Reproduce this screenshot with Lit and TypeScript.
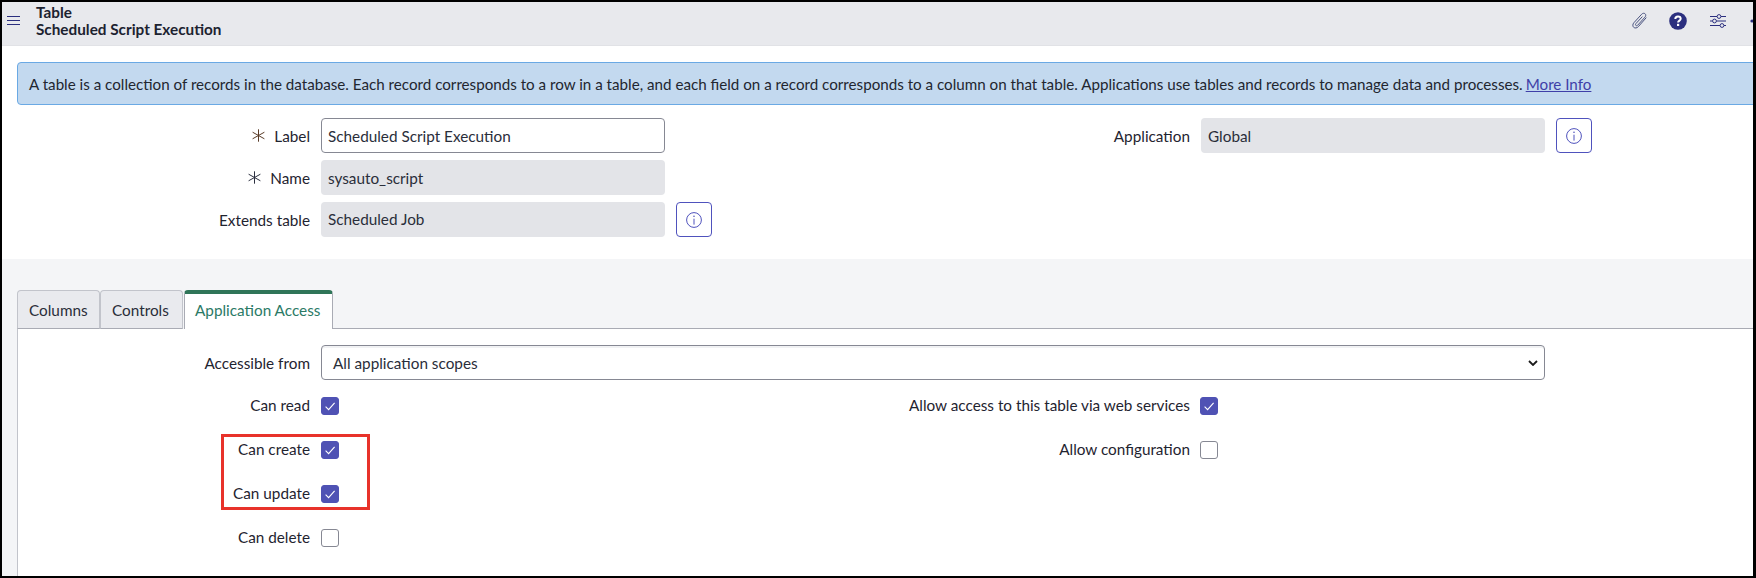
import { LitElement, html, css, svg } from "lit";
import { customElement } from "lit/decorators.js";

const check = svg`<svg class="tick" viewBox="0 0 18 18" width="18" height="18"><path d="M4.6 9.6 7.6 12.6 13.6 5.8" fill="none" stroke="#fff" stroke-width="1.1"/></svg>`;
const info = svg`<svg viewBox="0 0 20 20" width="20" height="20"><circle cx="10" cy="10" r="7.4" fill="none" stroke="#4f52bd" stroke-width="1"/><path d="M10 8.7V14.6" stroke="#4f52bd" stroke-width="1"/><circle cx="10" cy="6.2" r=".8" fill="#4f52bd"/></svg>`;
const starPath = svg`<path d="M6.5 .3V12.7M.6 3.2 12.4 9.8M12.4 3.2 .6 9.8" stroke-width="1" fill="none"/>`;

@customElement("app-root")
export class AppRoot extends LitElement {
  static styles = css`
    :host {
      display: block;
      width: 1756px;
      height: 578px;
      overflow: hidden;
      font-family: Lato, "Liberation Sans", sans-serif;
      font-size: 15.3px;
      color: #1f2430;
    }
    * { box-sizing: border-box; }
    .frame {
      width: 1756px;
      height: 578px;
      border: solid #000;
      border-width: 2px 3px 2px 2px;
      background: #fff;
      position: relative;
      overflow: hidden;
      display: flex;
      flex-direction: column;
    }
    .head {
      height: 44px;
      flex: none;
      background: #e8e9ed;
      border-bottom: 1px solid #e1e2e6;
      display: flex;
      align-items: flex-start;
      padding-left: 5px;
    }
    .burger { width: 13px; height: 9px; margin-top: 14px; margin-right: 16px; display: flex; flex-direction: column; justify-content: space-between; flex: none; }
    .burger i { display: block; height: 1px; background: #2b2f7f; }
    .titles { font-weight: 700; line-height: 17px; color: #1c2230; margin-top: 2px; }
    .titles div { white-space: nowrap; }
    .tools { margin-left: auto; display: flex; align-items: center; margin-right: -14px; margin-top: 10px; height: 18px; }
    .tools svg { display: block; flex: none; }
    .clip { margin-right: 21px; }
    .help, .sliders { margin-right: 22px; }
    .top { padding: 16px 0 0 15px; height: 213px; flex: none; }
    .banner {
      width: 1760px;
      height: 43px;
      background: #c3d9ef;
      border: 1px solid #6aa9e4;
      border-radius: 4px;
      padding-left: 11px;
      display: flex;
      align-items: center;
      white-space: nowrap;
      color: #22262f;
      font-size: 15.18px;
    }
    .banner a { color: #3f3fa8; text-decoration: underline; margin-left: 3px; }
    .form { display: flex; margin-top: 13px; }
    .col { flex: none; display: flex; flex-direction: column; gap: 7px; }
    .col.one { width: 1014px; }
    .col.one .lab { width: 304px; }
    .col.two .lab { width: 170px; }
    .row { display: flex; align-items: center; height: 35px; }
    .lab { padding-right: 11px; display: flex; justify-content: flex-end; align-items: center; white-space: nowrap; flex: none; }
    .star { stroke: #2c3040; margin-right: 9px; }
    .star.req { stroke: #5a3c28; }
    .field {
      width: 344px;
      height: 35px;
      border-radius: 4px;
      background: #e3e4e8;
      padding-left: 7px;
      display: flex;
      align-items: center;
      color: #2a2e3a;
      flex: none;
    }
    .field.edit { background: #fff; border: 1px solid #868893; padding-left: 6px; }
    .field.up { padding-bottom: 2px; }
    .ibtn {
      width: 36px; height: 35px; margin-left: 11px; flex: none;
      border: 1px solid #4f52bd; border-radius: 4px; background: #fff;
      display: flex; align-items: center; justify-content: center;
    }
    .lower { flex: 1; background: #f4f5f7; padding: 31px 0 0 15px; display: flex; flex-direction: column; min-height: 0; }
    .tabs { display: flex; height: 39px; flex: none; }
    .tab {
      height: 39px;
      width: 83px;
      border: 1px solid #c2c4cb;
      border-bottom: 1px solid #a9abb4;
      border-radius: 4px 4px 0 0;
      background: #e9eaee;
      display: flex;
      align-items: center;
      padding: 0 11px;
      color: #2a2e3a;
    }
    .tab.w2 { margin-right: 1px; }
    .tab.on {
      width: 149px;
      padding: 0 10px 3px;
      background: #fff;
      color: #2b7a66;
      border-color: #a9abb4;
      border-top: 4px solid #2f7558;
      border-bottom: none;
    }
    .tabline { flex: 1; border-bottom: 1px solid #a9abb4; }
    .panel {
      flex: 1;
      background: #fff;
      border-left: 1px solid #c2c4cb;
      padding-top: 16px;
      min-height: 0;
    }
    .selrow { display: flex; align-items: center; height: 35px; }
    .selrow .lab { width: 303px; }
    .select {
      width: 1224px; height: 35px;
      border: 1px solid #868893; border-radius: 4px; background: #fff;
      box-shadow: inset 0 2px 0 #f1f2f4;
      display: flex; align-items: center; justify-content: space-between;
      padding: 0 6px 0 11px; color: #2a2e3a; flex: none;
    }
    .checks { display: flex; margin-top: 17px; }
    .ccol { display: flex; flex-direction: column; gap: 26px; flex: none; }
    .ccol.a { width: 879px; }
    .crow { display: flex; align-items: center; height: 18px; }
    .crow .lab { width: 303px; padding-bottom: 3px; }
    .ccol.b .lab { padding-right: 10px; }
    .cb { width: 18px; height: 18px; border-radius: 3px; flex: none; border: 1px solid #868893; background: #fff; }
    .cb.on { background: #4f52b4; border-color: #4f52b4; position: relative; }
    .tick { position: absolute; left: -1px; top: -1px; }
    .mark { position: absolute; left: 219px; top: 432px; width: 149px; height: 76px; border: 3px solid #e8322a; pointer-events: none; }
  `;

  private cb(on: boolean) {
    return html`<span class="cb ${on ? "on" : ""}">${on ? check : ""}</span>`;
  }

  render() {
    return html`<div class="frame">
      <div class="head">
        <div class="burger"><i></i><i></i><i></i></div>
        <div class="titles"><div>Table</div><div>Scheduled Script Execution</div></div>
        <div class="tools">
          <svg class="clip" viewBox="0 0 17 18" width="17" height="18"><path d="M15.3 5.6 7.4 14.6C6 16.2 3.9 16.4 2.7 15.3 1.5 14.2 1.5 12.2 3 10.6L10.7 2.2C11.7 1.1 13.2 1 14.1 1.8 15 2.6 15 4 14 5.1L6.7 13.2C6.1 13.8 5.3 13.9 4.8 13.4 4.3 12.9 4.4 12.1 5 11.5L11.4 4.6" fill="none" stroke="#4b5480" stroke-width="1"/></svg>
          <svg class="help" viewBox="0 0 18 18" width="18" height="18"><circle cx="9" cy="9" r="8.8" fill="#2b2f7f"/><path d="M6.3 7C6.3 5.4 7.6 4.4 9 4.4 10.5 4.4 11.7 5.4 11.7 6.8 11.7 8.6 9.1 8.6 9.1 10.5" fill="none" stroke="#fff" stroke-width="2"/><rect x="8" y="11.8" width="2.2" height="2.2" fill="#fff"/></svg>
          <svg class="sliders" viewBox="0 0 18 14" width="18" height="14"><g fill="none" stroke="#2b2f7f" stroke-width="1"><path d="M1 2.5H8M12 2.5H17M1 7H3.5M7.5 7H17M1 11.5H11M15 11.5H17"/><circle cx="10" cy="2.5" r="1.9"/><circle cx="5.5" cy="7" r="1.9"/><circle cx="13" cy="11.5" r="1.9"/></g></svg>
          <svg viewBox="0 0 18 18" width="18" height="18"><circle cx="3" cy="9" r="1.6" fill="#2b2f7f"/><circle cx="9" cy="9" r="1.6" fill="#2b2f7f"/><circle cx="15" cy="9" r="1.6" fill="#2b2f7f"/></svg>
        </div>
      </div>
      <div class="top">
        <div class="banner"><span>A table is a collection of records in the database. Each record corresponds to a row in a table, and each field on a record corresponds to a column on that table. Applications use tables and records to manage data and processes.</span><a>More Info</a></div>
        <div class="form">
          <div class="col one">
            <div class="row"><div class="lab"><svg class="star req" viewBox="0 0 13 13" width="13" height="13">${starPath}</svg>Label</div><div class="field edit">Scheduled Script Execution</div></div>
            <div class="row"><div class="lab"><svg class="star" viewBox="0 0 13 13" width="13" height="13">${starPath}</svg>Name</div><div class="field">sysauto_script</div></div>
            <div class="row"><div class="lab">Extends table</div><div class="field up">Scheduled Job</div><div class="ibtn">${info}</div></div>
          </div>
          <div class="col two">
            <div class="row"><div class="lab">Application</div><div class="field">Global</div><div class="ibtn">${info}</div></div>
          </div>
        </div>
      </div>
      <div class="lower">
        <div class="tabs">
          <div class="tab">Columns</div>
          <div class="tab w2">Controls</div>
          <div class="tab on">Application Access</div>
          <div class="tabline"></div>
        </div>
        <div class="panel">
          <div class="selrow"><div class="lab">Accessible from</div>
            <div class="select"><span>All application scopes</span>
              <svg viewBox="0 0 10 6" width="10" height="6"><path d="M1 1 5 5 9 1" fill="none" stroke="#1a1a1a" stroke-width="1.8"/></svg>
            </div>
          </div>
          <div class="checks">
            <div class="ccol a">
              <div class="crow"><div class="lab">Can read</div>${this.cb(true)}</div>
              <div class="crow"><div class="lab">Can create</div>${this.cb(true)}</div>
              <div class="crow"><div class="lab">Can update</div>${this.cb(true)}</div>
              <div class="crow"><div class="lab">Can delete</div>${this.cb(false)}</div>
            </div>
            <div class="ccol b">
              <div class="crow"><div class="lab">Allow access to this table via web services</div>${this.cb(true)}</div>
              <div class="crow"><div class="lab">Allow configuration</div>${this.cb(false)}</div>
            </div>
          </div>
        </div>
      </div>
      <div class="mark"></div>
    </div>`;
  }
}
